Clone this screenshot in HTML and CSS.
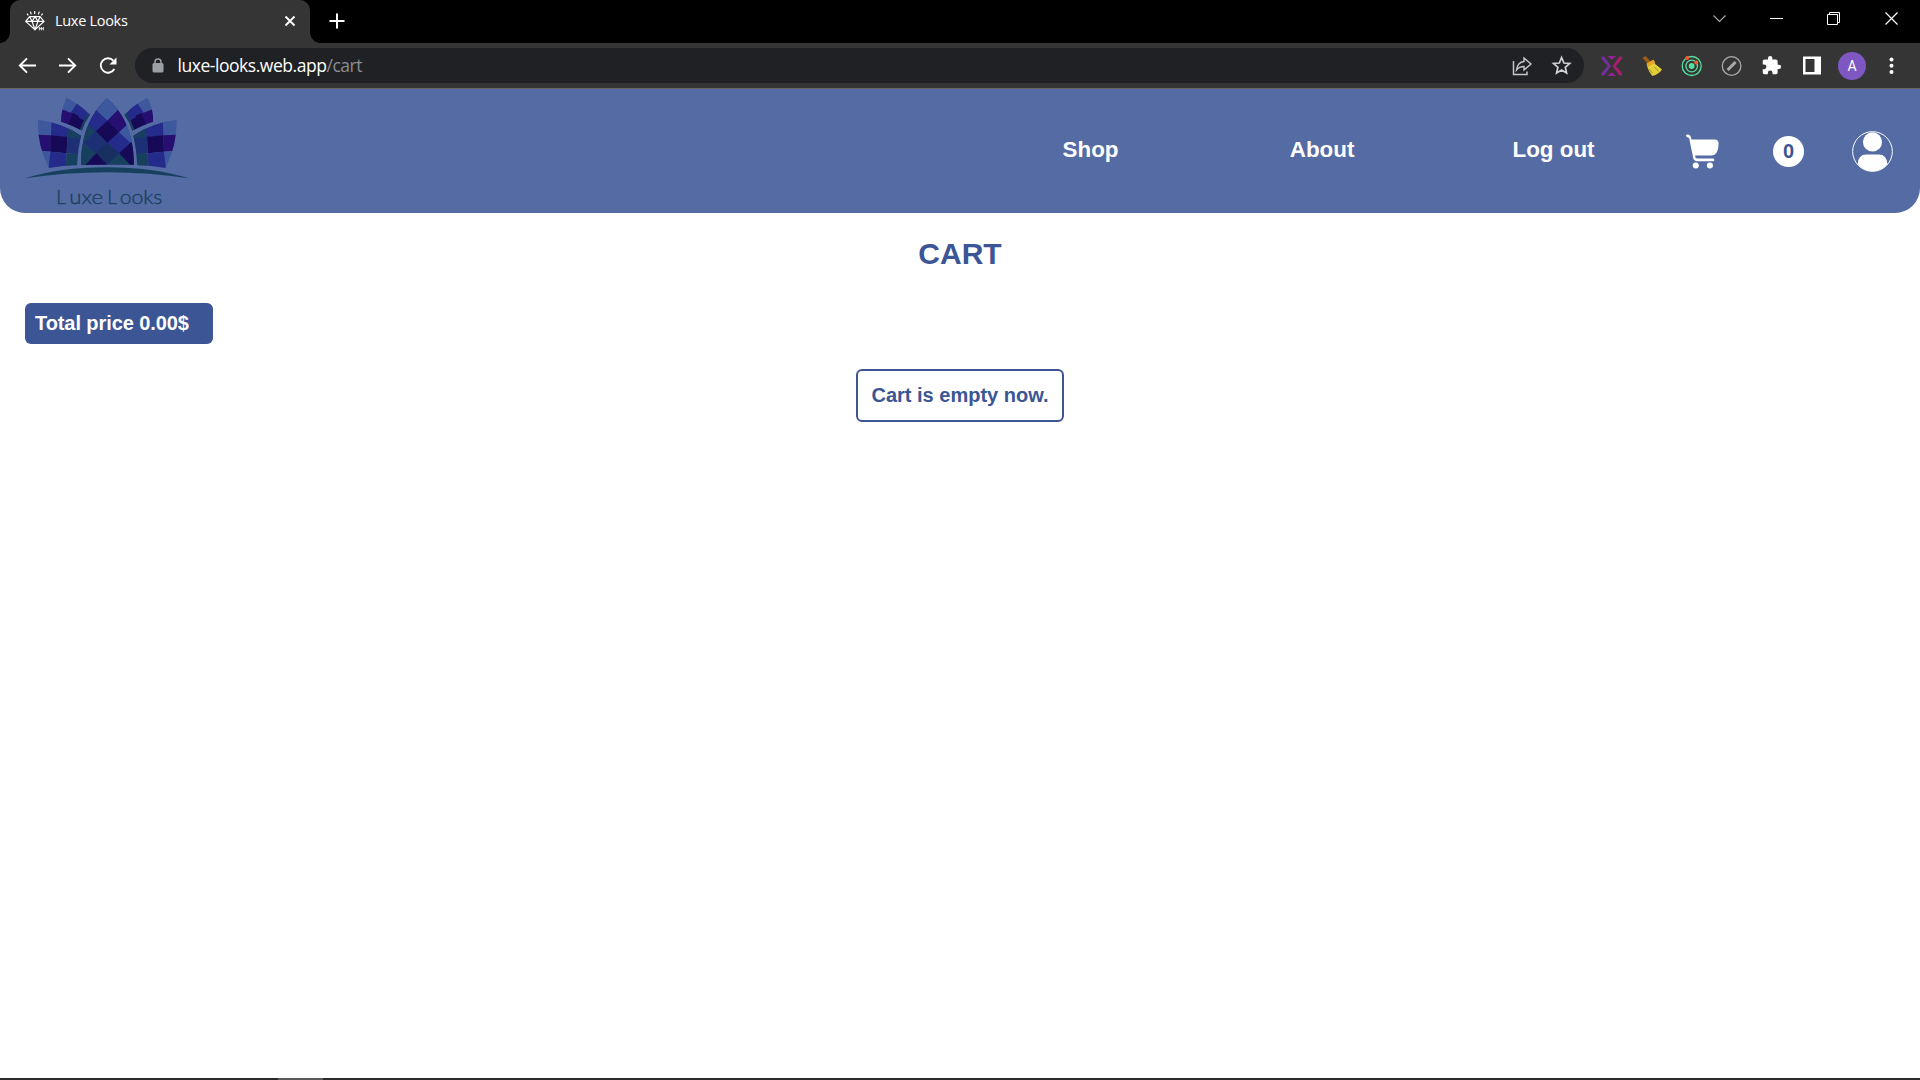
FILE: index.html
```html
<!DOCTYPE html>
<html lang="en">
<head>
<meta charset="utf-8">
<title>Luxe Looks</title>
<link rel="stylesheet" href="styles.css">
</head>
<body>
<div class="tabstrip">
  <div class="tab">
    <svg class="favicon" viewBox="0 0 60 60" fill="none" stroke="#fff" stroke-width="3.5"><path d="M14 17H45L57 31 30 56 2 31ZM2 31H57M14 17l7 14 9 25 9-25 6-14M21 31l9-14 9 14M29 0v9M16 2l3 8M43 2l-3 8M6 8l4 5M53 8l-4 5"/><path d="M43 48v10M49 48v10M55 48v10M43 53h12" stroke-width="2.5"/></svg>
    <span class="tab-title">Luxe Looks</span>
    <svg class="tab-close" viewBox="0 0 12 12" fill="none" stroke="#fff" stroke-width="1.9"><path d="M1.500 1.500l9 9M10.500 1.500l-9 9"/></svg>
  </div>
  <svg class="new-tab" viewBox="0 0 16 16" stroke="#fff" stroke-width="2"><path d="M8 .5v15M.5 8h15"/></svg>
  <div class="window-buttons">
    <svg viewBox="0 0 57 40" fill="none" stroke="#aaa" stroke-width="1.1"><path d="M22.500 16.500l6 6 6-6"/></svg>
    <svg viewBox="0 0 57 40" fill="none" stroke="#fff"><path d="M22 19.500h13"/></svg>
    <svg viewBox="0 0 57 40" fill="none" stroke="#fff"><path d="M22.500 15.500h10v10h-10zM24.500 15.500v-2h10v10h-2"/></svg>
    <svg viewBox="0 0 57 40" fill="none" stroke="#fff" stroke-width="1.200"><path d="M23.500 13.500l12 12M35.500 13.500l-12 12"/></svg>
  </div>
</div>
<div class="toolbar">
  <div class="cells">
    <svg viewBox="0 0 30 30" fill="none" stroke="#fff" stroke-width="1.900"><path d="M23 14.500H7.500M14 7.300L6.800 14.500l7.200 7.200"/></svg>
    <svg viewBox="0 0 30 30" fill="none" stroke="#fff" stroke-width="1.900"><path d="M6 14.500h15.500M15 7.300l7.200 7.200-7.200 7.200"/></svg>
    <svg viewBox="0 0 30 30" fill="none" stroke="#fff" stroke-width="1.900"><path d="M21.300 18a7.200 7.200 0 1 1-.9-8.300"/><path d="M23.500 6.500v7h-7z" fill="#fff" stroke="none"/></svg>
  </div>
  <div class="omnibox">
    <svg class="lock" viewBox="0 0 12 15"><rect x=".5" y="5" width="11" height="9.500" rx="1.500" fill="#9aa0a6"/><path d="M3 6V4a3 3 0 0 1 6 0v2" fill="none" stroke="#9aa0a6" stroke-width="1.500"/></svg>
    <span class="url">luxe-looks.web.app<span class="path">/cart</span></span>
    <div class="cells">
      <svg viewBox="0 0 30 30" fill="none" stroke="#c4c6c8" stroke-width="1.500"><path d="M6.500 10v13.500H20v-3"/><path d="M17 7l7 6-7 6v-3.500c-3.500 0-5.500 1-7.500 3.500.6-4.500 3-8 7.500-8.500z" stroke-width="1.400"/></svg>
      <svg viewBox="0 0 30 30" fill="none" stroke="#d0d0d2" stroke-width="1.700"><path d="M14.600 6.500l2.300 5.500 5.800.5-4.400 3.800 1.300 5.700-5-3-5 3 1.300-5.700-4.400-3.800 5.800-.5z"/></svg>
    </div>
  </div>
  <div class="cells extensions">
    <svg viewBox="0 0 30 30"><path d="M4.500 5.500V8l6.200 7-6.200 7v2.500h2.600L14 15 7.100 5.500z" fill="#71309c"/><path d="M25 5.500V8l-6.200 7 6.200 7v2.500h-2.600L15.500 15l6.900-9.500z" fill="#a91c70"/><path d="M10.500 5h8.600l-4.300 3.700zM10.500 25h8.600l-4.300-3.700z" fill="#99209a"/></svg>
    <svg viewBox="0 0 30 30"><path d="M5.500 7l3-2 6 6.500-3 2z" fill="#a05c14"/><path d="M10 13.500l7-4 1 3.500c3 2 5 4 7 5.500-2 3-5.500 5.500-9.500 6.500-2.500-3-5-6.500-5.500-11.500z" fill="#e3cf3a"/><path d="M9.500 12.500l7-4 1.500 3.500-7.500 4z" fill="#e9a525"/><path d="M12 18l3.500 4M17.500 16l4 4.500" stroke="#a7941c"/></svg>
    <svg viewBox="0 0 30 30" fill="none" stroke="#55e0a0" stroke-width="1.300"><circle cx="14.700" cy="15" r="9.500"/><circle cx="14.700" cy="15" r="5.800"/><circle cx="14.700" cy="15" r="2.300" fill="#55e0a0"/><g fill="#f4582c" stroke="none"><circle cx="10.200" cy="7" r="2"/><circle cx="19.200" cy="11.500" r="2"/></g></svg>
    <svg viewBox="0 0 30 30" fill="none" stroke="#aaa" stroke-width="1.300"><circle cx="14.600" cy="15" r="9.300"/><path d="M10.600 19l8-8" stroke-width="3"/></svg>
    <svg viewBox="0 0 24 24" class="puzzle"><path fill="#fff" d="M20.500 11H19V7c0-1.100-.9-2-2-2h-4V3.500a2.500 2.500 0 0 0-5 0V5H4c-1.100 0-2 .9-2 2v3.800h1.500a2.700 2.700 0 0 1 0 5.400H2V20c0 1.100.9 2 2 2h3.800v-1.500a2.700 2.700 0 0 1 5.400 0V22H17c1.100 0 2-.9 2-2v-4h1.500a2.500 2.500 0 0 0 0-5z"/></svg>
    <svg viewBox="0 0 30 30"><path fill="#fff" fill-rule="evenodd" d="M6 5.500h18v18H6zM8.500 8v13h9V8z"/></svg>
    <span class="avatar">A</span>
    <svg viewBox="0 0 30 30" fill="#fff"><circle cx="14.500" cy="8.500" r="2"/><circle cx="14.500" cy="14.700" r="2"/><circle cx="14.500" cy="21" r="2"/></svg>
  </div>
</div>
<header class="site-header">
  <svg class="logo" viewBox="60 12 520 371">
    <defs>
      <clipPath id="center"><path d="M321 40C375 86 402 155 402 239Q320 237 243 240C243 155 268 89 321 40Z"/></clipPath>
      <clipPath id="side"><path d="M113 104Q185 112 243 152Q233 195 231 241Q188 241 147 249Q112 185 113 104Z"/></clipPath>
      <clipPath id="upper"><path d="M200 38Q235 55 270 89Q254 112 246 138Q220 122 183 110Q183 72 200 38Z"/></clipPath>
      <g id="petals">
        <g clip-path="url(#side)">
          <path fill="#3d589d" d="M105 95h53v56h-53z"/><path fill="#242b8a" d="M155 95h53v62l-55-5z"/><path fill="#1d3075" d="M205 110h45v50h-45z"/>
          <path fill="#260f70" d="M105 149l48 2-1 49-47-4z"/><path fill="#160a57" d="M153 151l49 4-2 50-49-5z"/><path fill="#1d3075" d="M202 155l45-3-8 57-39-4z"/>
          <path fill="#3d589d" d="M105 196l46 4-3 55h-43z"/><path fill="#242b8a" d="M151 200l49 5-3 50h-52z"/><path fill="#17405f" d="M200 205l40 2v45h-43zM205 130l45 15-8 15-38-3z"/>
        </g>
        <g clip-path="url(#upper)">
          <path fill="#3d589d" d="M180 30h70v80h-70z"/><path fill="#242b8a" d="M231 55l28 18-24 38-27-22z"/><path fill="#260f70" d="M183 72l37 14-13 36-26-8z"/><path fill="#160a57" d="M219 84l35 17-14 36-35-18z"/><path fill="#242b8a" d="M245 58l30 25-20 25-20-11z"/><path fill="#17405f" d="M264 84l13 8-28 48-10-6z"/>
        </g>
      </g>
    </defs>
    <use href="#petals"/>
    <use href="#petals" transform="translate(643 0) scale(-1 1)"/>
    <g clip-path="url(#center)">
      <path fill="#242b8a" d="M235 35h175v210H235z"/>
      <path fill="#3d589d" d="M321 35l35 38-34 34-36-33zM390 110l30 40-25 27-38-35z"/>
      <path fill="#260f70" d="M356 73l36 36-35 32-35-34z"/><path fill="#160a57" d="M322 107l35 34-35 32-35-34z"/>
      <path fill="#242b8a" d="M287 74l35 33-35 32-35-32z"/>
      <path fill="#17405f" d="M252 107l35 32-35 35-25-28z"/>
      <path fill="#1d3075" d="M287 139l35 34-33 32-37-31z"/>
      <path fill="#17405f" d="M252 174l37 31-37 40h-25v-45z"/>
      <path fill="#17305f" d="M322 173l35 32-35 36-33-36z"/>
      <path fill="#160a57" d="M289 205l36 38h-72zM357 205l37-34 15 16v60h-14z"/>
      <path fill="#17405f" d="M322 239l35-34 38 39h-73z"/>
    </g>
    <path d="M76 280Q180 247 320 247Q460 247 566 280Q450 262 320 262Q190 262 76 280Z" fill="#17405f"/>
    <text class="logo-text" y="357"><tspan x="169">L</tspan><tspan x="208" textLength="101" lengthAdjust="spacingAndGlyphs">uxe</tspan><tspan x="322">L</tspan><tspan x="359" textLength="128" lengthAdjust="spacingAndGlyphs">ooks</tspan></text>
  </svg>
  <nav class="nav"><a>Shop</a><a>About</a><a>Log out</a></nav>
  <div class="account">
    <svg class="cart" viewBox="78 71 98 104" fill="#fff"><path d="M80 73q12-2 14 14h68q13 0 13 13-1 35-22 35h-48q0 9 7 9h46q4 0 4 4t-4 4h-48q-11 0-12-17L89 92q0-11-7-11-7-5-2-8z"/><circle cx="107" cy="164.500" r="9"/><circle cx="149" cy="164.500" r="9"/></svg>
    <span class="count">0</span>
    <svg class="user" viewBox="0 0 124 124"><circle cx="62" cy="62" r="60" fill="none" stroke="#fff" stroke-width="3"/><circle cx="62" cy="33" r="29" fill="#fff"/><path d="M17 100Q19 71 43 71H81Q105 71 107 100Q91 122 62 122T17 100Z" fill="#fff"/></svg>
  </div>
</header>
<main class="page">
  <h1>CART</h1>
  <div class="total">Total price 0.00$</div>
  <div class="empty">Cart is empty now.</div>
</main>
<footer class="taskbar"><span class="active-app"></span></footer>
</body>
</html>
```
FILE: styles.css
```css
* { box-sizing: border-box; }
html, body { height: 100%; }
body {
  margin: 0;
  display: flex;
  flex-direction: column;
  overflow: hidden;
  background: #fff;
  font-family: "Liberation Sans", Arial, sans-serif;
}
svg { display: block; flex: none; }

.tabstrip { display: flex; flex: none; height: 43px; padding-left: 10px; background: #000; }
.tab {
  position: relative;
  display: flex;
  align-items: center;
  width: 300px;
  padding: 0 14px 2px 15px;
  border-radius: 10px 10px 0 0;
  background: #353535;
  color: #fff;
}
.tab::before, .tab::after {
  content: "";
  position: absolute;
  bottom: 0;
  width: 10px;
  height: 10px;
}
.tab::before { left: -10px; background: radial-gradient(circle at 0 0, transparent 9.5px, #353535 10px); }
.tab::after { right: -10px; background: radial-gradient(circle at 100% 0, transparent 9.5px, #353535 10px); }
.favicon { width: 20px; height: 20px; }
.tab-title { margin-left: 10px; margin-right: auto; font: 14.5px "Open Sans", sans-serif; letter-spacing: -0.3px; }
.tab-close { width: 12px; height: 12px; }
.new-tab { width: 16px; height: 16px; margin: 13px 0 0 19px; }
.window-buttons { display: flex; margin-left: auto; margin-right: 1px; }
.window-buttons svg { width: 57px; height: 40px; margin-top: -1px; }

.toolbar {
  display: flex;
  flex: none;
  align-items: center;
  height: 46px;
  padding: 0 8px;
  background: #353535;
  border-bottom: 1px solid #676565;
}
.cells { display: flex; align-items: center; }
.cells svg { width: 30px; height: 30px; margin: 0 5px; }
.omnibox {
  display: flex;
  align-items: center;
  width: 1450px;
  height: 35px;
  margin-left: 7px;
  padding: 0 2px 0 17px;
  border-radius: 18px;
  background: #202124;
}
.omnibox .cells { margin-left: auto; }
.lock { width: 12px; height: 15px; }
.url { margin-left: 13.5px; padding-bottom: 1px; color: #fff; font: 17.5px "Open Sans", sans-serif; letter-spacing: -0.46px; }
.path { color: #8b8d90; }
.extensions { margin-left: 8px; }
.extensions .puzzle { width: 21px; height: 21px; margin: 0 10px 0 9px; }
.avatar {
  width: 28px;
  height: 28px;
  margin: 0 6px;
  border-radius: 50%;
  background: #7e57c2;
  color: #fff;
  font: 14px/28px Roboto, sans-serif;
  text-align: center;
}

.site-header {
  display: flex;
  flex: none;
  align-items: center;
  height: 124px;
  padding: 0 27px 0 20px;
  border-radius: 0 0 25px 25px;
  background: #556ba3;
}
.logo { width: 173.33px; height: 123.67px; }
.logo-text { fill: #17405f; font: 300 57px Lato, sans-serif; stroke: #17405f; stroke-width: 1px; }
.nav { display: grid; grid-template-columns: repeat(3, 231.5px); margin-left: auto; padding-bottom: 2px; }
.nav a { color: #fff; font-size: 22.4px; font-weight: bold; line-height: 26px; text-align: center; }
.account { display: flex; align-items: center; margin-left: 16.7px; }
.cart { width: 33px; height: 35px; }
.count {
  width: 31px;
  height: 31px;
  margin-left: 54px;
  border-radius: 50%;
  background: #fff;
  color: #3c5595;
  font-size: 20px;
  font-weight: bold;
  line-height: 31px;
  text-align: center;
}
.user { width: 41px; height: 41px; margin-left: 48px; }

.page { display: flex; flex: 1; flex-direction: column; align-items: center; padding: 24px 25px; color: #3c5595; font-weight: bold; }
h1 { margin: 0; font-size: 30px; line-height: 34px; }
.total {
  align-self: flex-start;
  width: 188px;
  height: 41px;
  margin-top: 32px;
  padding-left: 10px;
  border-radius: 6px;
  background: #3c5595;
  color: #fff;
  font-size: 20px;
  letter-spacing: -0.08px;
  line-height: 41px;
}
.empty {
  width: 208px;
  margin-top: 25px;
  border: 2px solid #3c5595;
  border-radius: 6px;
  font-size: 20px;
  line-height: 49px;
  text-align: center;
}

.taskbar { flex: none; height: 2px; padding-left: 278px; background: #2c2a2b; }
.active-app { display: block; width: 45px; height: 2px; background: #5c5a5b; }
```
